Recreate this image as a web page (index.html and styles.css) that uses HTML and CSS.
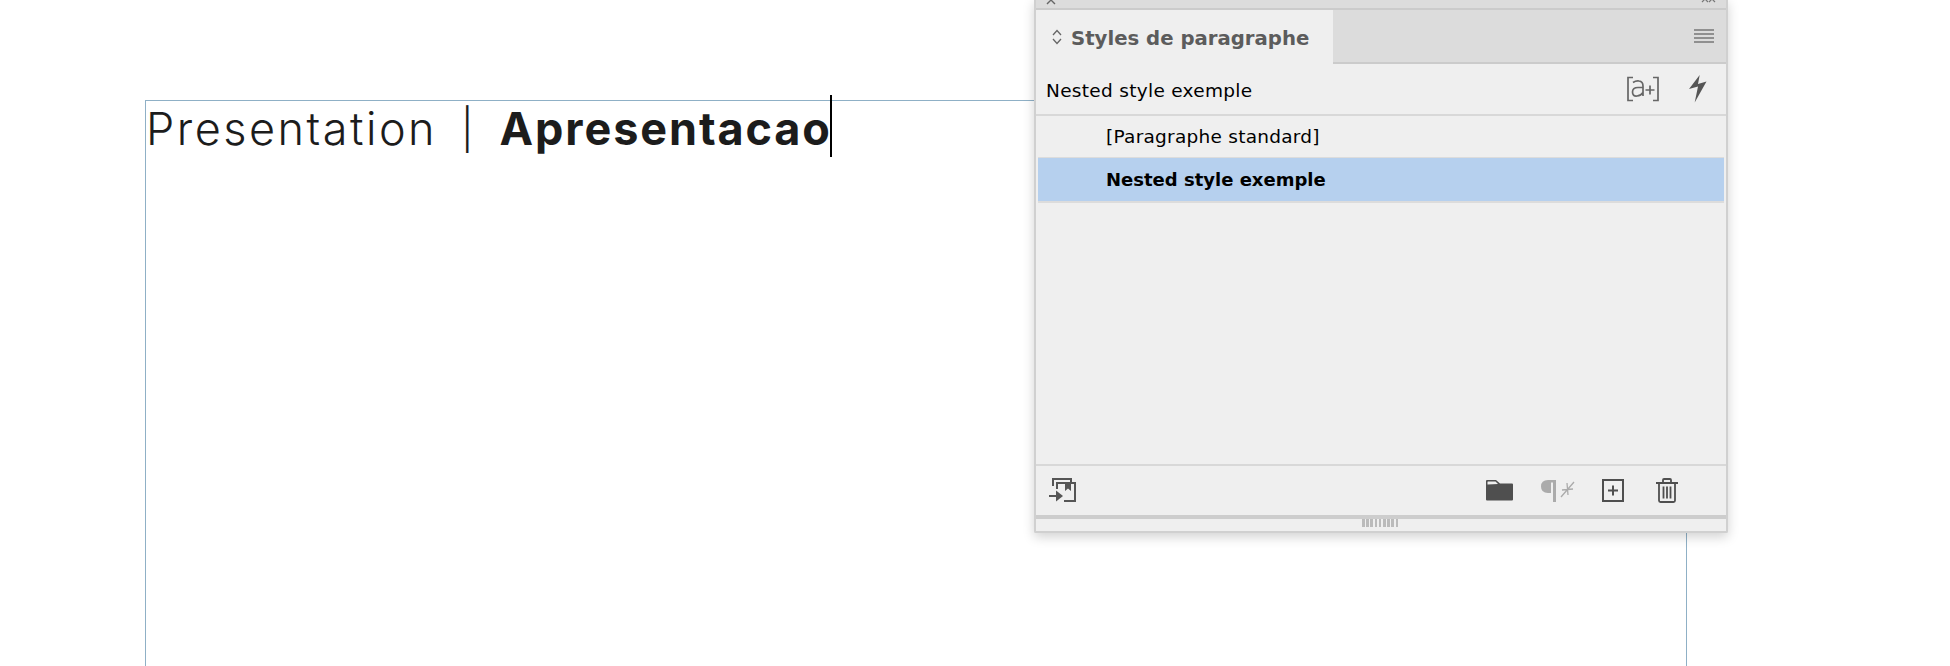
FILE: index.html
```html
<!DOCTYPE html>
<html lang="fr">
<head>
<meta charset="utf-8">
<title>Styles de paragraphe</title>
<link rel="stylesheet" href="styles.css">
</head>
<body>
<main class="canvas">
  <div class="frame">
    <p class="headline"><span class="light">Presentation</span><span class="sep">|</span><span class="bold">Apresentacao</span><span class="caret"></span></p>
  </div>
</main>
<aside class="panel">
  <div class="topbar">
    <svg class="close" width="12" height="9" viewBox="0 0 12 9"><path d="M2 -3 L10 5 M10 -3 L2 5" stroke="#666" stroke-width="1.4" fill="none"/></svg>
    <svg class="collapse" width="16" height="9" viewBox="0 0 16 9"><path d="M2 3 L5 0 M8 3 L5 0 M9 3 L12 0 M15 3 L12 0" stroke="#777" stroke-width="1.2" fill="none"/></svg>
  </div>
  <div class="tabs">
    <div class="tab">
      <svg class="updown" width="12" height="18" viewBox="0 0 12 18"><path d="M2 7 L6 2.5 L10 7 M2 11 L6 15.5 L10 11" stroke="#666" stroke-width="1.3" fill="none"/></svg>
      <span class="tab-label">Styles de paragraphe</span>
    </div>
    <div class="tab-rest">
      <svg class="menu" width="20" height="14" viewBox="0 0 20 14"><path d="M0 1 H20 M0 5 H20 M0 9 H20 M0 13 H20" stroke="#777" stroke-width="1.4" fill="none"/></svg>
    </div>
  </div>
  <div class="options">
    <span class="current">Nested style exemple</span>
    <div class="option-icons">
      <svg width="34" height="26" viewBox="0 0 34 26"><g fill="none" stroke="#666" stroke-width="1.7"><path d="M7 1.500 H2 V24.500 H7 M27 1.500 H32 V24.500 H27"/><path d="M7 6.500 Q10 4.500 13 5 Q17 5.500 17 10 V20 M17 11.500 H12 Q6.500 11.500 6.500 16 Q6.500 20.500 11 20 Q15 19.700 17 16.500"/><path d="M19.500 14 H28.500 M24 9.500 V18.500"/></g></svg>
      <svg width="18" height="28" viewBox="0 0 18 28"><path d="M10.700 0 L0 14 L9 11.500 L5.700 27.500 L17.500 6.500 L9 9 Z" fill="#555"/></svg>
    </div>
  </div>
  <ul class="list">
    <li class="row">[Paragraphe standard]</li>
    <li class="row selected">Nested style exemple</li>
  </ul>
  <div class="footer">
    <svg class="load" width="28" height="28" viewBox="0 0 28 28"><g fill="none" stroke="#555" stroke-width="2"><path d="M4 9 V2 H22 V6"/><path d="M8 12 V6 H26 V24 H15"/></g><path d="M16 6 H22 V14 L19 11.500 L16 14 Z" fill="#555"/><path d="M0 19 H8" stroke="#555" stroke-width="2"/><path d="M7 13.500 L14 19 L7 24.500 Z" fill="#555"/></svg>
    <div class="footer-icons">
      <svg width="27" height="21" viewBox="0 0 27 21"><path d="M1 20.500 Q0 20.500 0 19.500 V1 Q0 0 1 0 H10 L14 3.500 H26 Q27 3.500 27 4.500 V19.500 Q27 20.500 26 20.500 Z" fill="#4f4f4f"/><path d="M1.500 4.500 V2 Q1.500 1.500 2 1.500 H9.500 L12 4 Z" fill="#eee"/></svg>
      <svg width="35" height="24" viewBox="0 0 35 24"><path d="M8 1 H16 V23 H13 V3.500 H11 V14 H8 Q1 14 1 7.500 Q1 1 8 1 Z" fill="#ababab"/><path d="M21 18 L34 3 M27 4 L28 16 M22 11 L33 10" stroke="#ababab" stroke-width="1.300" fill="none"/></svg>
      <svg width="22" height="23" viewBox="0 0 22 23"><rect x="1" y="1" width="20" height="21" fill="none" stroke="#4f4f4f" stroke-width="2"/><path d="M6 11.500 H16 M11 6.500 V16.500" stroke="#4f4f4f" stroke-width="2" fill="none"/></svg>
      <svg class="trash" width="22" height="25" viewBox="0 0 22 25"><g fill="none" stroke="#4f4f4f" stroke-width="1.800"><path d="M0 5 H22 M7 5 V2 Q7 1 8 1 H14 Q15 1 15 2 V5"/><path d="M3 5 V22.500 Q3 24 4.500 24 H17.500 Q19 24 19 22.500 V5"/><path d="M7.500 8.500 V20.500 M11 8.500 V20.500 M14.500 8.500 V20.500"/></g></svg>
    </div>
  </div>
  <div class="grip"><span class="grip-lines"></span></div>
</aside>
</body>
</html>
```
FILE: styles.css
```css
html, body { margin: 0; padding: 0; height: 100%; overflow: hidden; background: #fff; }
.canvas { width: 1950px; height: 666px; padding: 100px 0 0 145px; box-sizing: border-box; }
.frame { width: 1542px; height: 566px; box-sizing: border-box; border: 1px solid #8fb0c6; border-bottom: 0; }
.headline { margin: 0; display: flex; align-items: center; height: 54px; font-family: "Inter", sans-serif; font-size: 45px; color: #1c1c1c; white-space: nowrap; }
.light { font-weight: 300; letter-spacing: 2.500px; }
.sep { font-weight: 300; font-size: 40px; margin: 3px 26px 0 24px; }
.bold { font-weight: 700; letter-spacing: 1.900px; }
.caret { width: 2px; height: 62px; background: #000; margin-top: -4px; margin-left: -2px; }

.panel { position: absolute; left: 1034px; top: -1px; width: 694px; height: 534px; box-sizing: border-box; background: #efefef; border: 2px solid #d0d0d0; border-top: 0; border-radius: 0 0 2px 2px; box-shadow: 0 4px 12px rgba(0,0,0,.18); display: flex; flex-direction: column; font-family: "DejaVu Sans", sans-serif; color: #000; }
.topbar { height: 9px; background: #dcdcdc; border-bottom: 2px solid #cbcbcb; display: flex; justify-content: space-between; padding: 0 0 0 9px; flex: none; }
.collapse { margin-right: 10px; }
.tabs { display: flex; height: 54px; flex: none; }
.tab { width: 297px; background: #efefef; display: flex; align-items: center; gap: 7px; padding-left: 15px; box-sizing: border-box; }
.tab-label { font-size: 19.700px; font-weight: 700; color: #5c5c5c; margin: 3px 0 0 1px; }
.tab-rest { flex: 1; background: #dcdcdc; border-bottom: 2px solid #cbcbcb; display: flex; align-items: center; justify-content: flex-end; padding-right: 12px; }
.options { height: 52px; flex: none; display: flex; align-items: center; justify-content: space-between; padding: 0 19px 0 10px; border-bottom: 2px solid #d8d8d8; box-sizing: border-box; }
.current { font-size: 18.500px; letter-spacing: .300px; margin-top: 3px; }
.option-icons { display: flex; align-items: center; gap: 29px; }
.list { flex: 1; margin: 0 2px; padding: 0; list-style: none; }
.row { height: 42px; box-sizing: border-box; padding-left: 68px; display: flex; align-items: center; font-size: 18.500px; letter-spacing: .250px; border-bottom: 1px solid #dcdcdc; }
.row.selected { background: #b6d0ee; font-size: 18px; letter-spacing: 0; font-weight: 700; border-bottom: 2px solid #dcdcdc; height: 45px; }
.footer { height: 49px; flex: none; border-top: 2px solid #d8d8d8; border-bottom: 4px solid #cdcdcd; display: flex; align-items: center; justify-content: space-between; padding: 0 48px 0 13px; }
.footer-icons { display: flex; align-items: center; gap: 27px; }
.trash { margin-left: 5px; }
.grip { height: 12px; flex: none; display: flex; justify-content: center; align-items: flex-start; }
.grip-lines { width: 38px; height: 8px; background: repeating-linear-gradient(90deg, #bbb 0 2.500px, transparent 2.500px 4.200px); }
```
